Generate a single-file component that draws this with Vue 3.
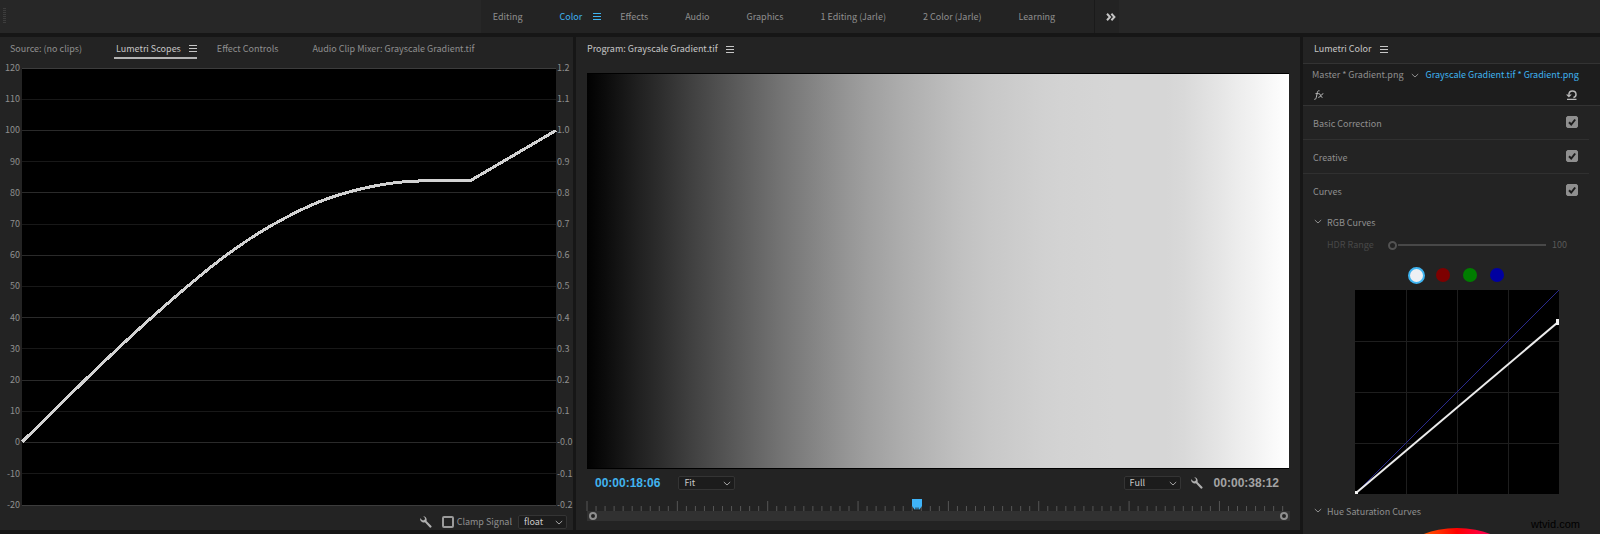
<script setup>
import { ref } from 'vue'

const workspaces = ['Editing', 'Color', 'Effects', 'Audio', 'Graphics', '1 Editing (Jarle)', '2 Color (Jarle)', 'Learning']
const scopeTabs = ['Source: (no clips)', 'Lumetri Scopes', 'Effect Controls', 'Audio Clip Mixer: Grayscale Gradient.tif']
const workspace = ref('Color')
const scopeTab = ref('Lumetri Scopes')

const leftScale = Array.from({ length: 15 }, (_, i) => String(120 - i * 10))
const rightScale = leftScale.map((v) => (v === '0' ? '-0.0' : (Number(v) / 100).toFixed(1)))

/* Transfer curve: input position (0-1) against signal level (0-100) */
const curve = [
  [0, 0.2], [0.0587, 10], [0.1214, 20.6], [0.1839, 30.8], [0.2463, 40.6], [0.309, 49.9],
  [0.3715, 58.6], [0.434, 66.1], [0.4966, 72.3], [0.5591, 77.3], [0.6216, 80.7],
  [0.6842, 82.9], [0.7467, 83.8], [0.8386, 83.8], [1, 100]
]
function slope(i) {
  const last = curve.length - 1
  if (i >= last - 2) return 0
  const a = curve[Math.max(0, i - 1)]
  const b = curve[i + 1]
  return (b[1] - a[1]) / (b[0] - a[0])
}
function level(x) {
  const i = Math.max(1, curve.findIndex((p) => p[0] >= x))
  const [x0, y0] = curve[i - 1]
  const [x1, y1] = curve[i]
  const w = x1 - x0
  const t = (x - x0) / w
  if (i >= curve.length - 2) return y0 + (y1 - y0) * t
  const t2 = t * t
  const t3 = t2 * t
  return (2 * t3 - 3 * t2 + 1) * y0 + (t3 - 2 * t2 + t) * w * slope(i - 1) + (3 * t2 - 2 * t3) * y1 + (t3 - t2) * w * slope(i)
}
const trace = Array.from({ length: 267 }, (_, i) => {
  const x = i / 266
  return `${(x * 1400).toFixed(1)},${(1200 - level(x) * 10).toFixed(1)}`
}).join(' ')
const gradient = `linear-gradient(90deg, ${Array.from({ length: 41 }, (_, i) => {
  const g = Math.round((level(i / 40) / 100) * 255)
  return `rgb(${g},${g},${g}) ${i * 2.5}%`
}).join(', ')})`

const ticks = Array.from({ length: 78 }, (_, i) => ({ x: `${(i * 1.287).toFixed(3)}%`, major: i % 10 === 0 }))
const sections = ref([
  { name: 'Basic Correction', on: true },
  { name: 'Creative', on: true },
  { name: 'Curves', on: true }
])
const channels = ['white', 'red', 'green', 'blue']
const channel = ref('white')
const clamp = ref(false)
const hdr = ref(0)
</script>

<template>
  <div class="app">
    <header class="topbar">
      <span class="grip"></span>
      <nav class="workspaces">
        <button v-for="w in workspaces" :key="w" type="button" class="ws" :class="{ active: w === workspace }" @click="workspace = w">
          {{ w }}
          <svg v-if="w === workspace" class="menu" viewBox="0 0 8 7"><path d="M0 .5h8M0 3.5h8M0 6.5h8" /></svg>
        </button>
        <button type="button" class="more" aria-label="More workspaces">
          <svg viewBox="0 0 10 8"><path d="M1 .8 4 4 1 7.2M5.4.8l3 3.2-3 3.2" /></svg>
        </button>
      </nav>
    </header>

    <main class="panels">
      <section class="panel scopes">
        <div class="tabs">
          <button v-for="t in scopeTabs" :key="t" type="button" class="tab" :class="{ active: t === scopeTab }" @click="scopeTab = t">
            {{ t }}
            <svg v-if="t === scopeTab" class="menu" viewBox="0 0 8 7"><path d="M0 .5h8M0 3.5h8M0 6.5h8" /></svg>
          </button>
        </div>
        <div class="scope">
          <div class="scale left"><span v-for="v in leftScale" :key="v">{{ v }}</span></div>
          <svg class="plot" viewBox="0 0 1400 1400" preserveAspectRatio="none">
            <line v-for="i in 15" :key="i" x1="0" x2="1400" :y1="(i - 1) * 100" :y2="(i - 1) * 100" :class="i === 1 || i === 15 ? 'edge' : i % 2 ? 'even' : 'odd'" />
            <polyline :points="trace" class="trace" />
          </svg>
          <div class="scale right"><span v-for="v in rightScale" :key="v">{{ v }}</span></div>
        </div>
        <div class="scope-tools">
          <button type="button" class="wrench" aria-label="Scope settings">
            <svg viewBox="0 0 12 12"><path d="M3.2.2 5 2.1 4.7 3.8 3 4.4 1.1 3.3.1 2.1C-.1 4 .8 6.1 3 6.5c.8.1 1.3 0 1.9-.2l4.9 5.2c.9.8 2.3-.5 1.6-1.500L6.500 5C7.200 2.400 5.800.3 3.200.2Z" /></svg>
          </button>
          <label class="clamp"><input v-model="clamp" type="checkbox" />Clamp Signal</label>
          <span class="drop float">
            <select aria-label="Bit depth"><option>float</option></select>
            <svg viewBox="0 0 8 5"><path d="M.8 1 4 4 7.2 1" /></svg>
          </span>
        </div>
      </section>

      <section class="panel program">
        <div class="head">
          <h2>Program: Grayscale Gradient.tif</h2>
          <svg class="menu" viewBox="0 0 8 7"><path d="M0 .5h8M0 3.5h8M0 6.5h8" /></svg>
        </div>
        <div class="monitor" :style="{ backgroundImage: gradient }"></div>
        <div class="transport">
          <span class="time now">00:00:18:06</span>
          <span class="drop">
            <select aria-label="Zoom level"><option>Fit</option></select>
            <svg viewBox="0 0 8 5"><path d="M.8 1 4 4 7.2 1" /></svg>
          </span>
          <span class="drop full">
            <select aria-label="Playback resolution"><option>Full</option></select>
            <svg viewBox="0 0 8 5"><path d="M.8 1 4 4 7.2 1" /></svg>
          </span>
          <button type="button" class="wrench" aria-label="Program settings">
            <svg viewBox="0 0 12 12"><path d="M3.2.2 5 2.1 4.7 3.8 3 4.4 1.1 3.3.1 2.1C-.1 4 .8 6.1 3 6.5c.8.1 1.3 0 1.9-.2l4.9 5.2c.9.8 2.3-.5 1.6-1.500L6.500 5C7.200 2.400 5.800.3 3.200.2Z" /></svg>
          </button>
          <span class="time">00:00:38:12</span>
        </div>
        <div class="timeline">
          <svg class="ruler">
            <line v-for="t in ticks" :key="t.x" :x1="t.x" :x2="t.x" :y1="t.major ? 2 : 7" y2="12" />
          </svg>
          <svg class="playhead" viewBox="0 0 10 11"><path d="M0 0h10v7L7.5 10.5H2.5L0 7Z" /><path class="notch" d="M4 11V8.5M6 11V8.5" /></svg>
          <div class="zoombar"><span class="knob"></span><span class="knob"></span></div>
        </div>
      </section>

      <aside class="panel color">
        <div class="head">
          <h2>Lumetri Color</h2>
          <svg class="menu" viewBox="0 0 8 7"><path d="M0 .5h8M0 3.5h8M0 6.5h8" /></svg>
        </div>
        <div class="source">
          <div class="clips">
            <span>Master * Gradient.png</span>
            <svg class="chev" viewBox="0 0 8 5"><path d="M.8 1 4 4 7.2 1" /></svg>
            <span class="clip">Grayscale Gradient.tif * Gradient.png</span>
          </div>
          <div class="effect">
            <svg class="fx" viewBox="0 0 10 10"><path d="M.3 9.3c1.300.3 1.700-.6 2-2L3.400 2.300C3.700 1 4.300.5 5.500.8M1.500 3.600h3.300M5 3.700c1.600-.5 1.500 4.200 3.500 3.700M9.300 3.600C7.500 3.600 6.500 7.600 4.300 7.400" /></svg>
            <button type="button" class="reset" aria-label="Reset effect">
              <svg viewBox="0 0 11 10"><path d="M2.8 4.6C3 2.300 4.500 1 6.300 1 8.500 1 10 2.500 10 4.600 10 6.300 9 7.400 7.400 7.600M1 9.400h9.500" /><path class="arrow" d="M0 4.400h5.800L2.900 7.600Z" /></svg>
            </button>
          </div>
        </div>
        <label v-for="s in sections" :key="s.name" class="section">
          {{ s.name }}
          <span class="check">
            <input v-model="s.on" type="checkbox" />
            <svg v-if="s.on" viewBox="0 0 12 12"><path d="M3 6.3 5.2 8.5 9.2 3.5" /></svg>
          </span>
        </label>
        <div class="sub">
          <svg class="chev" viewBox="0 0 8 5"><path d="M.8 1 4 4 7.2 1" /></svg>
          <h3>RGB Curves</h3>
        </div>
        <div class="hdr">
          <label for="hdr">HDR Range</label>
          <input id="hdr" v-model="hdr" type="range" min="0" max="100" disabled />
          <output for="hdr">100</output>
        </div>
        <div class="channels">
          <button v-for="c in channels" :key="c" type="button" :aria-label="c" :class="[c, { active: c === channel }]" @click="channel = c"></button>
        </div>
        <svg class="curves" viewBox="0 0 204 204">
          <rect width="204" height="204" />
          <path class="grid" d="M51.5 0v204M102.5 0v204M153.5 0v204M0 51.5h204M0 102.5h204M0 153.5h204" />
          <path class="base" d="M0 204 204 0" />
          <path class="line" d="M1 203 202 33" />
          <rect class="point" x="0" y="201" width="3" height="3" />
          <rect class="point" x="201" y="29" width="3" height="6" />
        </svg>
        <div class="sub hue">
          <svg class="chev" viewBox="0 0 8 5"><path d="M.8 1 4 4 7.2 1" /></svg>
          <h3>Hue Saturation Curves</h3>
        </div>
        <div class="wheel"></div>
        <span class="credit">wtvid.com</span>
      </aside>
    </main>
  </div>
</template>

<style>
body { background: #161616; }
</style>

<style scoped>
.app {
  display: flex;
  flex-direction: column;
  height: 100vh;
  overflow: hidden;
  background: #161616;
  color: #8f8f8f;
  font: 9px/12px "Noto Sans CJK SC", "Open Sans", sans-serif;
}
.app * { box-sizing: border-box; }
button, select { border: 0; padding: 0; margin: 0; background: none; color: inherit; font: inherit; }
input { margin: 0; }
h2, h3 { margin: 0; font: inherit; }
svg { display: block; fill: none; stroke: currentColor; flex: none; }
.menu { width: 8px; height: 7px; }
.chev { width: 8px; height: 5px; }

.topbar { position: relative; display: flex; justify-content: center; height: 33px; background: #272727; flex: none; }
.grip { position: absolute; left: 3px; top: 8px; width: 3px; height: 16px; background: repeating-linear-gradient(#3d3d3d 0 1px, #272727 1px 2px); }
.workspaces { display: flex; gap: 37px; padding-left: 12px; background: #232323; white-space: nowrap; }
.ws { display: flex; align-items: center; gap: 11px; }
.ws.active { color: #3fb4f0; margin-right: -18px; }
.more { width: 25px; margin-left: 2px; padding-left: 8px; border-left: 1px solid #1a1a1a; color: #c4c4c4; display: flex; align-items: center; justify-content: center; }
.more svg { width: 10px; height: 8px; stroke-width: 2; }

.panels { flex: 1; min-height: 0; margin-top: 4px; display: grid; grid-template-columns: minmax(0, 573fr) minmax(0, 724fr) 297px; grid-template-rows: minmax(0, 1fr); gap: 3px; }
.panel { background: #232323; min-height: 0; display: flex; flex-direction: column; overflow: hidden; white-space: nowrap; }
.scopes, .program { margin-bottom: 4px; }

.tabs { display: flex; gap: 34px; height: 31px; padding: 0 10px; flex: none; }
.tab { display: flex; align-items: center; gap: 8px; height: 22px; padding-top: 2px; }
.tab.active { color: #c6c6c6; border-bottom: 2px solid #b4b4b4; margin: 0 -14px 0 -2px; padding: 3px 0 0 2px; }
.scope { flex: 1; min-height: 0; display: grid; grid-template-columns: 22px minmax(0, 1fr) 17px; grid-template-rows: minmax(0, 1fr); }
.scale { display: flex; flex-direction: column; justify-content: space-between; margin: -6px 0; }
.scale.left { text-align: right; padding-right: 2px; }
.scale.right { padding-left: 1px; }
.plot { width: 100%; height: 100%; min-height: 0; background: #000; overflow: visible; }
.plot * { vector-effect: non-scaling-stroke; shape-rendering: crispEdges; }
.plot .edge { stroke: #3c3c3c; }
.plot .even { stroke: #2a2a2a; }
.plot .odd { stroke: #181818; }
.plot .trace { stroke: #d2d2d2; stroke-width: 3px; }
.scope-tools { display: flex; align-items: center; justify-content: flex-end; height: 25px; padding: 8px 6px 0 0; flex: none; }
.wrench, .wrench svg { width: 12px; height: 12px; }
.wrench svg { fill: #b0b0b0; stroke: none; }
.clamp { display: flex; align-items: center; gap: 3px; margin: 0 6px 0 10px; }
.clamp input { appearance: none; width: 12px; height: 12px; border: 2px solid #9a9a9a; border-radius: 2px; }
.clamp input:checked { background: #9a9a9a; }

.drop { position: relative; width: 57px; height: 14px; }
.drop select { display: block; appearance: none; width: 100%; height: 14px; line-height: 12px; padding: 0 16px 0 5px; border: 1px solid #343434; border-radius: 2px; background: #1c1c1c; color: #c8c8c8; }
.drop svg { position: absolute; right: 4px; top: 5px; width: 8px; height: 5px; color: #a5a5a5; pointer-events: none; }
.float { width: 49px; }

.head { display: flex; align-items: center; gap: 8px; height: 22px; padding-top: 2px; flex: none; color: #c6c6c6; }
.program .head { padding-left: 11px; margin-bottom: 14px; }
.monitor { flex: 1; min-height: 0; margin: 0 11px; border: solid #000; border-width: 1px 0; background-color: #000; }
.transport { display: flex; align-items: center; height: 28px; padding: 0 21px 0 19px; flex: none; }
.time { font: bold 12px/14px "Liberation Sans", Arial, sans-serif; color: #a3a3a3; }
.now { color: #41b3ef; margin-right: 18px; }
.full { margin-left: auto; margin-right: 10px; }
.transport .wrench { margin-right: 11px; }
.timeline { position: relative; margin: 2px 11px 9px; flex: none; }
.ruler { width: 100%; height: 12px; stroke: #565656; overflow: visible; }
.playhead { position: absolute; left: 46.3%; top: 0; width: 10px; height: 11px; fill: #3fb4f9; stroke: none; }
.playhead .notch { stroke: #232323; }
.zoombar { display: flex; justify-content: space-between; align-items: center; height: 10px; margin-right: -1px; padding: 0 2px; background: #313131; }
.knob { width: 8px; height: 8px; border: 2px solid #8f8f8f; border-radius: 50%; background: #232323; }

.color { position: relative; }
.color .head { padding-left: 11px; height: 26px; padding-bottom: 4px; }
.source { height: 43px; flex: none; background: #1d1d1d; border-top: 1px solid #333; border-bottom: 1px solid #333; padding-left: 9px; }
.clips { display: flex; align-items: center; gap: 7px; height: 22px; }
.clip { color: #3fb4f0; }
.effect { display: flex; align-items: center; justify-content: space-between; height: 18px; padding: 0 23px 0 2px; color: #b8b8b8; }
.fx { width: 10px; height: 10px; }
.reset svg { width: 11px; height: 10px; stroke-width: 1.5; }
.reset .arrow { fill: currentColor; stroke: none; }
.section { display: flex; align-items: center; justify-content: space-between; height: 34px; margin-right: 11px; padding: 3px 11px 0 10px; border-bottom: 1px solid #303030; flex: none; }
.section:nth-of-type(3) { border-bottom-color: transparent; }
.check { position: relative; width: 12px; height: 12px; margin-bottom: 4px; }
.check input { display: block; appearance: none; width: 12px; height: 12px; border: 1px solid #8f8f8f; border-radius: 2px; }
.check input:checked { background: #8f8f8f; }
.check svg { position: absolute; inset: 0; width: 12px; height: 12px; stroke: #1c1c1c; stroke-width: 2; pointer-events: none; }
.sub { display: flex; align-items: center; gap: 5px; height: 12px; margin: 9px 0 0 11px; flex: none; }
.sub .chev { margin-bottom: 4px; }
.hdr { display: flex; align-items: center; height: 12px; margin: 10px 0 0 24px; color: #484848; flex: none; }
.hdr label { width: 61px; }
.hdr input { appearance: none; width: 158px; height: 10px; background: linear-gradient(#484848, #484848) 10px 4px / 148px 2px no-repeat; }
.hdr input::-webkit-slider-thumb { appearance: none; box-sizing: border-box; width: 9px; height: 9px; border: 2px solid #525252; border-radius: 50%; background: #232323; }
.hdr output { margin-left: 6px; color: #5a5a5a; }
.channels { display: flex; align-items: center; gap: 13px; height: 18px; margin: 15px 0 0 106px; flex: none; }
.channels button { width: 14px; height: 14px; border-radius: 50%; }
.channels .active { width: 17px; height: 17px; margin: 0 -2px 0 -1px; border: 2px solid #3fb4f0; }
.white { background: #eef0f4; }
.red { background: #7d0000; }
.green { background: #007d00; }
.blue { background: #0000a0; }
.curves { width: 204px; height: 204px; margin: 6px 0 0 52px; }
.curves rect { fill: #000; stroke: none; }
.curves .point { fill: #f2f2f2; }
.curves .grid { stroke: #1e1e1e; }
.curves .base { stroke: #2a2a8c; }
.curves .line { stroke: #ececec; stroke-width: 2; }
.hue { margin-top: 12px; }
.wheel { width: 190px; height: 190px; margin: 10px 0 0 59px; border-radius: 50%; flex: none; background: conic-gradient(#f00, #f0f, #00f, #0ff, #0f0, #ff0, #f00); }
.credit { position: absolute; right: 20px; bottom: 3px; color: #000; font: 11px/13px "Liberation Sans", Arial, sans-serif; }
</style>
